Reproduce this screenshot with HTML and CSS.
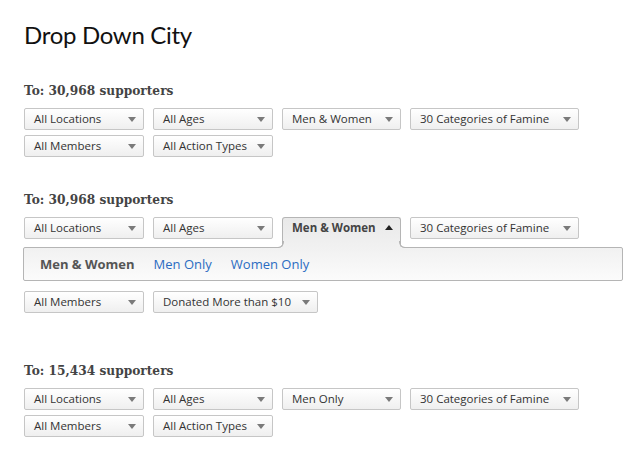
FILE: index.html
```html
<!DOCTYPE html>
<html lang="en">
<head>
<meta charset="utf-8">
<title>Drop Down City</title>
<link rel="stylesheet" href="styles.css">
</head>
<body>
<h1 class="title">Drop Down City</h1>

<section class="group group-first">
  <h2 class="count">To: 30,968 supporters</h2>
  <div class="row">
    <div class="dd w-loc"><span>All Locations</span><span class="caret"></span></div>
    <div class="dd w-age"><span>All Ages</span><span class="caret"></span></div>
    <div class="dd w-gen"><span>Men &amp; Women</span><span class="caret"></span></div>
    <div class="dd w-cat"><span>30 Categories of Famine</span><span class="caret"></span></div>
  </div>
  <div class="row">
    <div class="dd w-mem"><span>All Members</span><span class="caret"></span></div>
    <div class="dd w-act"><span>All Action Types</span><span class="caret"></span></div>
  </div>
</section>

<section class="group group-second">
  <h2 class="count">To: 30,968 supporters</h2>
  <div class="row row-tabs">
    <div class="dd w-loc"><span>All Locations</span><span class="caret"></span></div>
    <div class="dd w-age"><span>All Ages</span><span class="caret"></span></div>
    <div class="dd w-gen open"><span>Men &amp; Women</span><span class="caret caret-up"></span></div>
    <div class="dd w-cat"><span>30 Categories of Famine</span><span class="caret"></span></div>
  </div>
  <div class="panel">
    <span class="opt current">Men &amp; Women</span>
    <a class="opt" href="#">Men Only</a>
    <a class="opt" href="#">Women Only</a>
  </div>
  <div class="row row-after">
    <div class="dd w-mem"><span>All Members</span><span class="caret"></span></div>
    <div class="dd w-don"><span>Donated More than $10</span><span class="caret"></span></div>
  </div>
</section>

<section class="group group-third">
  <h2 class="count">To: 15,434 supporters</h2>
  <div class="row">
    <div class="dd w-loc"><span>All Locations</span><span class="caret"></span></div>
    <div class="dd w-age"><span>All Ages</span><span class="caret"></span></div>
    <div class="dd w-gen"><span>Men Only</span><span class="caret"></span></div>
    <div class="dd w-cat"><span>30 Categories of Famine</span><span class="caret"></span></div>
  </div>
  <div class="row">
    <div class="dd w-mem"><span>All Members</span><span class="caret"></span></div>
    <div class="dd w-act"><span>All Action Types</span><span class="caret"></span></div>
  </div>
</section>
</body>
</html>
```
FILE: styles.css
```css
* { box-sizing: border-box; }

html, body { background: #fff; }

body {
  margin: 0;
  padding: 20px 0 0 24px;
  font-family: "Open Sans", "DejaVu Sans", sans-serif;
  color: #333;
}

.title {
  margin: 0;
  font-family: Lato, "Open Sans", sans-serif;
  font-weight: 400;
  font-size: 24px;
  line-height: 30px;
  letter-spacing: -0.3px;
  color: #111;
}

.count {
  margin: 0 0 8px;
  font-family: "DejaVu Serif", Georgia, serif;
  font-weight: 700;
  font-size: 12.2px;
  line-height: 18px;
  color: #444;
}

.group-first { margin-top: 32px; }
.group-second { margin-top: 34px; }
.group-third { margin-top: 49px; }

.row {
  display: flex;
  align-items: flex-start;
  gap: 9px;
}
.row + .row { margin-top: 5px; }
.row-after { margin-top: 10px; }

.dd {
  display: flex;
  align-items: center;
  justify-content: space-between;
  gap: 6px;
  height: 22px;
  padding: 0 7px 0 9px;
  border: 1px solid #c6c6c6;
  border-radius: 2px;
  background: linear-gradient(#ffffff, #efefef);
  font-size: 11.5px;
  line-height: 16px;
  color: #333;
  white-space: nowrap;
}

.w-loc, .w-age, .w-mem, .w-act { width: 120px; }
.w-gen { width: 119px; }
.w-cat { width: 169px; }
.w-don { width: 165px; }

.caret {
  flex: none;
  width: 0;
  height: 0;
  border-left: 4.5px solid transparent;
  border-right: 4.5px solid transparent;
  border-top: 5px solid #7a7a7a;
}

.caret-up {
  border-top: 0;
  border-bottom: 5px solid #222;
  margin-top: 5px;
}

.dd.open {
  position: relative;
  z-index: 1;
  align-items: flex-start;
  height: 31px;
  margin-bottom: -1px;
  padding-top: 2px;
  border-color: #b5b5b5;
  border-bottom: 0;
  border-radius: 3px 3px 0 0;
  background: linear-gradient(#e9e9e9, #f1f1f1);
  font-weight: 700;
  color: #444;
}

.dd.open::before,
.dd.open::after {
  content: "";
  position: absolute;
  bottom: 0;
  width: 6px;
  height: 6px;
  border-bottom: 1px solid #b5b5b5;
}

.dd.open::before {
  left: -6px;
  border-right: 1px solid #b5b5b5;
  border-bottom-right-radius: 6px;
  box-shadow: 2px 2px 0 0 #f1f1f1;
}

.dd.open::after {
  right: -6px;
  border-left: 1px solid #b5b5b5;
  border-bottom-left-radius: 6px;
  box-shadow: -2px 2px 0 0 #f1f1f1;
}

.panel {
  display: flex;
  align-items: center;
  gap: 19px;
  width: 600px;
  height: 34px;
  margin-left: -1px;
  padding-left: 16px;
  border: 1px solid #b5b5b5;
  border-radius: 2px;
  background: linear-gradient(#f1f1f1, #fbfbfb);
  font-size: 13px;
}

.opt {
  color: #2b6cc2;
  text-decoration: none;
}

.opt.current {
  font-weight: 700;
  color: #555;
}
```
